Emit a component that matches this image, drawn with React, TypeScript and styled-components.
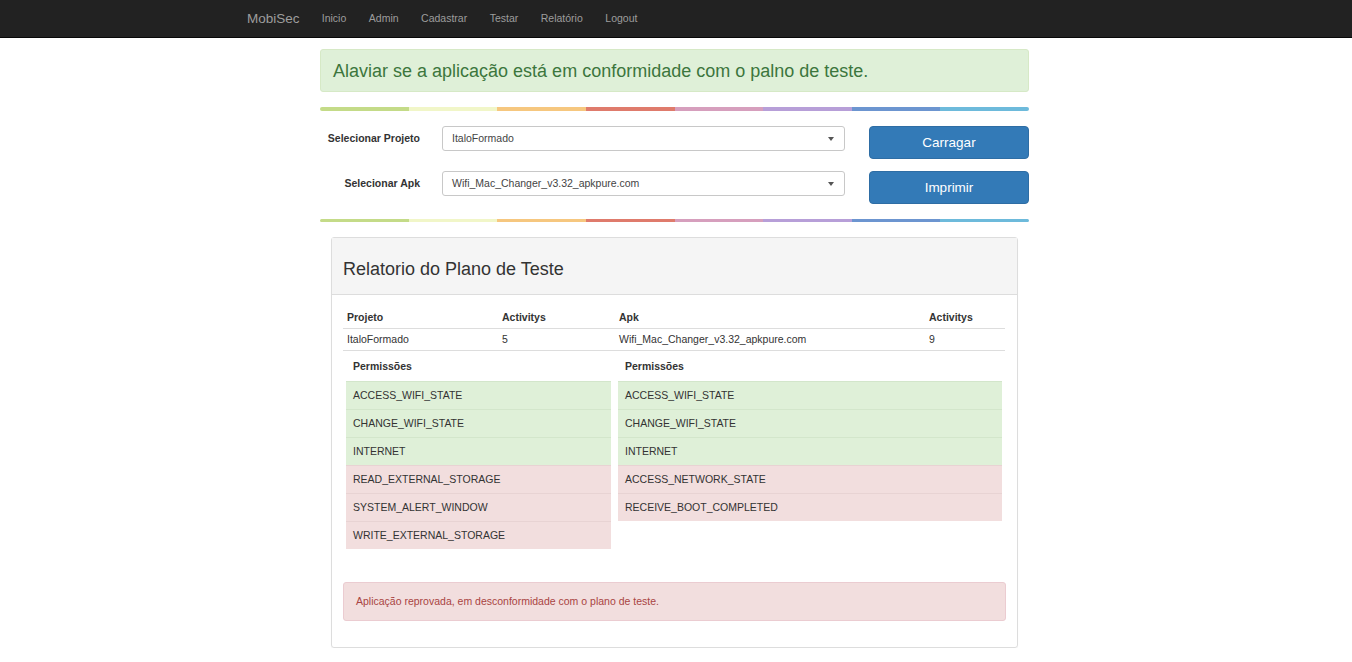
import { createGlobalStyle, styled } from "styled-components";

type Permission = { name: string; ok: boolean };

const links = ["Inicio", "Admin", "Cadastrar", "Testar", "Relatório", "Logout"];
const barColors = ["#c4db88", "#f1f6c8", "#f6c77f", "#df7b6c", "#d69fbd", "#b79fd8", "#6c95d0", "#6dbadb"];

const projectPerms: Permission[] = [
  { name: "ACCESS_WIFI_STATE", ok: true },
  { name: "CHANGE_WIFI_STATE", ok: true },
  { name: "INTERNET", ok: true },
  { name: "READ_EXTERNAL_STORAGE", ok: false },
  { name: "SYSTEM_ALERT_WINDOW", ok: false },
  { name: "WRITE_EXTERNAL_STORAGE", ok: false },
];

const apkPerms: Permission[] = [
  { name: "ACCESS_WIFI_STATE", ok: true },
  { name: "CHANGE_WIFI_STATE", ok: true },
  { name: "INTERNET", ok: true },
  { name: "ACCESS_NETWORK_STATE", ok: false },
  { name: "RECEIVE_BOOT_COMPLETED", ok: false },
];

const GlobalStyle = createGlobalStyle`
  * { box-sizing: border-box; }
  body {
    margin: 0;
    background: #fff;
    color: #333;
    font-family: "Liberation Sans", Arial, sans-serif;
    font-size: 10.5px;
    line-height: 15px;
  }
`;

const App = (): JSX.Element => {
  return (
    <>
      <GlobalStyle />
      <NavbarS>
        <NavInnerS>
          <BrandS>MobiSec</BrandS>
          {links.map((l) => (
            <NavLinkS key={l}>{l}</NavLinkS>
          ))}
        </NavInnerS>
      </NavbarS>
      <MainS>
        <SuccessAlertS>Alaviar se a aplicação está em conformidade com o palno de teste.</SuccessAlertS>
        <ColorBar />
        <FormS>
          <FormRowS>
            <LabelS>Selecionar Projeto</LabelS>
            <SelectS>ItaloFormado</SelectS>
            <PrimaryBtnS>Carragar</PrimaryBtnS>
          </FormRowS>
          <FormRowS>
            <LabelS>Selecionar Apk</LabelS>
            <SelectS>Wifi_Mac_Changer_v3.32_apkpure.com</SelectS>
            <PrimaryBtnS>Imprimir</PrimaryBtnS>
          </FormRowS>
        </FormS>
        <ColorBar />
        <PanelS>
          <PanelHeadS>Relatorio do Plano de Teste</PanelHeadS>
          <PanelBodyS>
            <InfoTableS>
              <InfoCellS $head>Projeto</InfoCellS>
              <InfoCellS $head>Activitys</InfoCellS>
              <InfoCellS $head>Apk</InfoCellS>
              <InfoCellS $head>Activitys</InfoCellS>
              <InfoCellS>ItaloFormado</InfoCellS>
              <InfoCellS>5</InfoCellS>
              <InfoCellS>Wifi_Mac_Changer_v3.32_apkpure.com</InfoCellS>
              <InfoCellS>9</InfoCellS>
            </InfoTableS>
            <PermGridS>
              <PermList items={projectPerms} />
              <PermList items={apkPerms} />
            </PermGridS>
            <DangerAlertS>Aplicação reprovada, em desconformidade com o plano de teste.</DangerAlertS>
          </PanelBodyS>
        </PanelS>
      </MainS>
    </>
  );
};

export default App;

const ColorBar = (): JSX.Element => (
  <ColorBarS>
    {barColors.map((c) => (
      <span key={c} style={{ background: c }} />
    ))}
  </ColorBarS>
);

const PermList = ({ items }: { items: Permission[] }): JSX.Element => (
  <PermListS>
    <PermHeadS>Permissões</PermHeadS>
    {items.map((p) => (
      <PermRowS key={p.name} $ok={p.ok}>
        {p.name}
      </PermRowS>
    ))}
  </PermListS>
);

const NavbarS = styled.nav`
  height: 38px;
  background: #222;
  border-bottom: 1px solid #080808;
`;

const NavInnerS = styled.div`
  width: 878px;
  margin: 0 auto;
  padding-left: 10px;
  display: flex;
  align-items: center;
  height: 37px;
`;

const BrandS = styled.a`
  font-size: 13.5px;
  color: #9d9d9d;
  margin-right: 11px;
`;

const NavLinkS = styled.a`
  color: #9d9d9d;
  padding: 0 11.25px;
  font-size: 10.5px;
`;

const MainS = styled.main`
  width: 709px;
  margin-left: calc(50% - 356px);
  padding-top: 11px;
`;

const SuccessAlertS = styled.div`
  background: #dff0d8;
  border: 1px solid #d6e9c6;
  border-radius: 3px;
  color: #3c763d;
  font-size: 18px;
  line-height: 20px;
  padding: 11px 12px 11px 12px;
  height: 43px;
`;

const ColorBarS = styled.div`
  display: flex;
  height: 3.5px;
  margin: 15px 0 15px;
  border-radius: 2px;
  overflow: hidden;

  span {
    flex: 1;
  }
`;

const FormS = styled.div`
  display: flex;
  flex-direction: column;
  gap: 12px;
`;

const FormRowS = styled.div`
  display: flex;
  align-items: flex-start;
  height: 33px;
`;

const LabelS = styled.label`
  width: 100px;
  margin-right: 22px;
  text-align: right;
  font-weight: bold;
  line-height: 25px;
  color: #333;
`;

const SelectS = styled.div`
  position: relative;
  width: 403px;
  height: 25.5px;
  border: 1px solid #c8c8c8;
  border-radius: 3px;
  padding-left: 9px;
  line-height: 23px;
  color: #444;

  &::after {
    content: "";
    position: absolute;
    right: 10px;
    top: 10px;
    border-left: 3px solid transparent;
    border-right: 3px solid transparent;
    border-top: 4px solid #555;
  }
`;

const PrimaryBtnS = styled.button`
  margin-left: 24px;
  width: 160px;
  height: 33px;
  background: #337ab7;
  border: 1px solid #2e6da4;
  border-radius: 4px;
  color: #fff;
  font-family: inherit;
  font-size: 13.5px;
`;

const PanelS = styled.section`
  margin: 1px 11px 0;
  border: 1px solid #ddd;
  border-radius: 3px;
  box-shadow: 0 1px 1px rgba(0, 0, 0, 0.05);
`;

const PanelHeadS = styled.h3`
  margin: 0;
  background: #f5f5f5;
  border-bottom: 1px solid #ddd;
  height: 57px;
  padding: 21px 11px 0;
  font-size: 18px;
  font-weight: normal;
  line-height: 20px;
  color: #333;
`;

const PanelBodyS = styled.div`
  padding: 12px 11px 11px;
`;

const InfoTableS = styled.div`
  display: grid;
  grid-template-columns: 155px 117px 310px 80px;
`;

const InfoCellS = styled.div<{ $head?: boolean }>`
  padding: 3px 4px;
  line-height: 15px;
  font-weight: ${(p) => (p.$head ? "bold" : "normal")};
  border-bottom: ${(p) => (p.$head ? "1.5px" : "1px")} solid #ddd;
`;

const PermGridS = styled.div`
  display: grid;
  grid-template-columns: 265px 384px;
  gap: 7px;
  padding-left: 3px;
`;

const PermListS = styled.div`
  display: flex;
  flex-direction: column;
  align-self: start;
`;

const PermHeadS = styled.div`
  font-weight: bold;
  padding: 8px 7px 7px;
  line-height: 15px;
`;

const PermRowS = styled.div<{ $ok: boolean }>`
  background: ${(p) => (p.$ok ? "#dff0d8" : "#f2dede")};
  border-top: 1px solid ${(p) => (p.$ok ? "#d3e6cb" : "#e8d3d3")};
  height: 28px;
  padding: 6px 7px;
  line-height: 15px;
`;

const DangerAlertS = styled.div`
  margin: 33px 0 15px;
  background: #f2dede;
  border: 1px solid #ebccd1;
  border-radius: 3px;
  color: #a94442;
  padding: 11px 12px;
  line-height: 15px;
  height: 38.5px;
`;
